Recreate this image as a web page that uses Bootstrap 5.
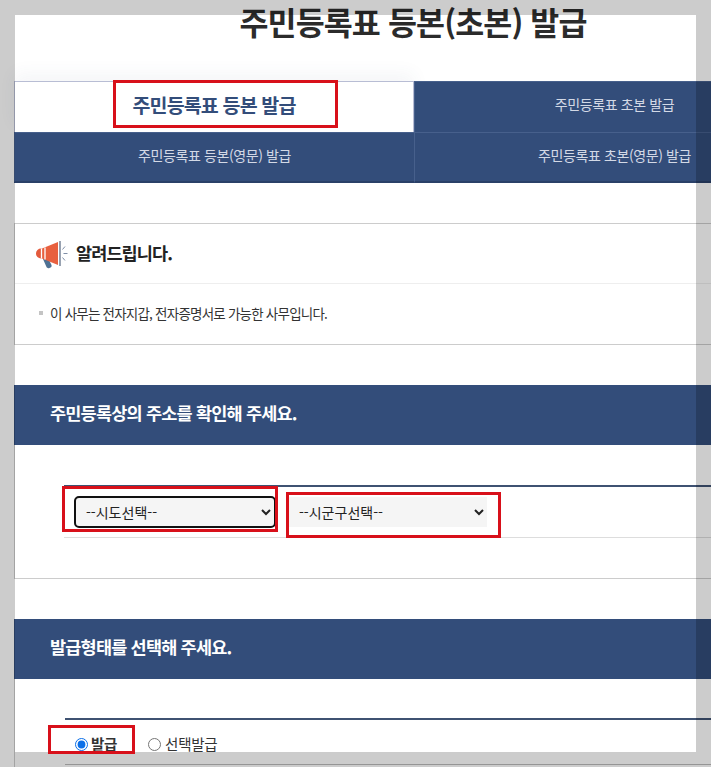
<!DOCTYPE html>
<html lang="ko">
<head>
<meta charset="utf-8">
<title>주민등록표 등본(초본) 발급</title>
<link rel="stylesheet" href="https://cdn.jsdelivr.net/npm/bootstrap@5.3.0/dist/css/bootstrap.min.css">
<style>
html,body{height:767px;overflow:hidden;background:#fff;}
body{font-family:"Noto Sans CJK KR","Noto Sans",sans-serif;color:#222;position:relative;}
.sheet{width:800px;margin-left:14px;}
.page-title{font-size:31.500px;font-weight:700;letter-spacing:-.87px;line-height:43px;height:81px;margin:0;padding-right:2px;color:#2b2b2b;text-align:center;}
.tab-cell{height:51px;background:#334d7a;color:#d3d9e6;font-size:14px;letter-spacing:-.4px;border-top:1px solid #47608c;border-left:1px solid #47608c;padding-bottom:5px;}
.tab-bottom{height:51px;padding-bottom:4px;border-bottom:2px solid #2a4068;}
.tab-on{background:#fff;color:#334d7a;font-size:19.500px;font-weight:700;letter-spacing:-.85px;border:1px solid #b8bdd4;border-bottom:0;box-shadow:0 -8px 16px rgba(60,70,110,.05);}
.notice{margin-top:40px;border:1px solid #ccc;border-right:0;height:122px;}
.notice-head{height:60px;border-bottom:1px solid #eee;padding-left:20px;gap:7px;font-size:17.500px;font-weight:700;letter-spacing:-.9px;color:#222;}
.notice-body{height:60px;padding-left:24px;padding-bottom:2px;font-size:13.500px;letter-spacing:-.78px;color:#333;gap:7px;}
.dot{width:4px;height:4px;background:#c4c4c4;}
.sec-head{height:60px;margin-top:40px;padding-left:36px;padding-bottom:3px;background:#334d7a;color:#fff;font-size:17.500px;font-weight:700;letter-spacing:-.8px;}
.sec-addr{height:134px;border-left:1px solid #ccc;border-bottom:1px solid #ccc;padding:40px 0 0 49px;}
.field-row{height:53px;border-top:2px solid #3f5272;border-bottom:1px solid #ddd;padding-left:12px;gap:15px;}
.pick{width:198px;height:30px;border:0;background:#f5f5f5;font-size:14px;color:#222;padding:0 4px 0 6px;font-family:inherit;}
.pick-focus{height:28px;outline:2px solid #111;outline-offset:0;border-radius:3px;}
.sec-type{border-left:1px solid #ccc;height:90px;padding:39px 0 0 50px;}
.radio-row{height:47px;border-top:2px solid #3f5272;border-bottom:1px solid #bbb;padding:4px 0 0 10px;font-size:14.500px;letter-spacing:-.3px;color:#333;}
.radio-row input{margin:0 3px 0 0;width:13px;height:13px;accent-color:#0b6fe8;}
.radio-row label{display:flex;align-items:center;margin-right:31px;}
.radio-row label+label input{margin-right:4px;}
.veil{position:absolute;background:rgba(0,0,0,.2);z-index:2;}
.veil-t{left:0;top:0;width:711px;height:15px;}
.veil-l{left:0;top:15px;width:15px;height:737px;}
.veil-r{left:696px;top:15px;width:15px;height:737px;}
.veil-b{left:0;top:752px;width:711px;height:15px;}
.redbox{position:absolute;border:3px solid #d8101a;z-index:3;}
.m1{left:113px;top:80px;width:225px;height:48px;}
.m2{left:62px;top:486px;width:216px;height:46px;}
.m3{left:286px;top:492px;width:215px;height:46px;}
.m4{left:48px;top:725px;width:87px;height:29px;}
</style>
</head>
<body>
<div class="sheet">
  <h1 class="page-title">주민등록표 등본(초본) 발급</h1>
  <div class="row g-0">
    <div class="col-6 tab-cell tab-on d-flex align-items-center justify-content-center">주민등록표 등본 발급</div>
    <div class="col-6 tab-cell d-flex align-items-center justify-content-center">주민등록표 초본 발급</div>
    <div class="col-6 tab-cell tab-bottom d-flex align-items-center justify-content-center">주민등록표 등본(영문) 발급</div>
    <div class="col-6 tab-cell tab-bottom d-flex align-items-center justify-content-center">주민등록표 초본(영문) 발급</div>
  </div>
  <div class="notice">
    <div class="notice-head d-flex align-items-center">
      <svg width="34" height="30" viewBox="0 0 34 30" aria-hidden="true">
        <path d="M8 20l5-1 3.500 7c.5 1.500-.5 2.500-2 3s-2.500 0-3-1z" fill="#4f7193"/>
        <path d="M7 9.500v10H6a5 5 0 0 1 0-10z" fill="#e35a3c"/>
        <path d="M7 9.500L23 3v23L7 19.500z" fill="#e8603f"/>
        <path d="M6.500 9.500v10M10 8.500v12" stroke="#fff" stroke-width="1.300"/>
        <path d="M24 2.500v24" stroke="#fff" stroke-width="1.500"/>
        <path d="M25 2l0 25" stroke="#55657f" stroke-width="1.200"/>
        <path d="M27.500 10.500l2.500-3M28.500 14.500h4M27.500 18.500l2.500 3" stroke="#7f8ea6" stroke-width="1" fill="none"/>
      </svg>
      <span>알려드립니다.</span>
    </div>
    <div class="notice-body d-flex align-items-center"><span class="dot"></span><span>이 사무는 전자지갑, 전자증명서로 가능한 사무입니다.</span></div>
  </div>
  <div class="sec-head d-flex align-items-center">주민등록상의 주소를 확인해 주세요.</div>
  <div class="sec-addr">
    <div class="field-row d-flex align-items-center">
      <select class="pick pick-focus"><option>--시도선택--</option></select>
      <select class="pick"><option>--시군구선택--</option></select>
    </div>
  </div>
  <div class="sec-head d-flex align-items-center">발급형태를 선택해 주세요.</div>
  <div class="sec-type">
    <div class="radio-row d-flex align-items-center">
      <label class="fw-bold"><input type="radio" name="kind" checked>발급</label>
      <label><input type="radio" name="kind">선택발급</label>
    </div>
  </div>
</div>
<div class="veil veil-t"></div><div class="veil veil-l"></div><div class="veil veil-r"></div><div class="veil veil-b"></div>
<div class="redbox m1"></div><div class="redbox m2"></div><div class="redbox m3"></div><div class="redbox m4"></div>
</body>
</html>
